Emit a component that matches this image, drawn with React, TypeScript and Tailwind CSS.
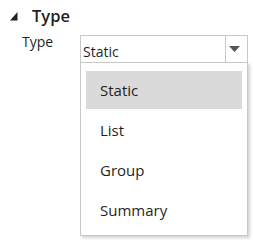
import React from "react";

export default function App() {
  const items = ["Static", "List", "Group", "Summary"];
  return (
    <div className="relative w-[253px] h-[240px] bg-white text-[#1f1f1f] font-['Open_Sans',sans-serif] overflow-hidden">
      <div className="flex items-center h-[20px] mt-[6px] pl-[10px]">
        <svg width="8" height="9" viewBox="0 0 8 9">
          <polygon points="7.5,0 7.5,8.5 0,8.5" fill="#222" />
        </svg>
        <span className="ml-[14px] text-[16.5px] font-semibold leading-[20px]">Type</span>
      </div>
      <div className="flex mt-[8px]">
        <div className="w-[80px] pl-[22px] text-[14px] leading-[16px]">Type</div>
        <div className="mt-[1px] w-[168px] h-[28px] border border-[#c8c8c8] flex">
          <div className="flex-1 pl-[2px] pt-[8px] text-[14px] leading-[16px]">Static</div>
          <div className="w-[22px] border-l border-[#c8c8c8] flex items-center pl-[3px]">
            <svg width="11" height="6" viewBox="0 0 11 6">
              <polygon points="0,0 11,0 5.5,6" fill="#555" />
            </svg>
          </div>
        </div>
      </div>
      <div className="absolute left-[80px] top-[62px] w-[168px] h-[174px] border border-[#c8c8c8] bg-white shadow-[2px_2px_3px_rgba(0,0,0,0.18)] px-[5px] pt-[8px] flex flex-col gap-[2px]">
        {items.map((it, i) => (
          <div
            key={it}
            className={
              "h-[38px] pl-[14px] text-[15px] leading-[38px] " +
              (i === 0 ? "bg-[#dadada]" : "")
            }
          >
            {it}
          </div>
        ))}
      </div>
    </div>
  );
}
